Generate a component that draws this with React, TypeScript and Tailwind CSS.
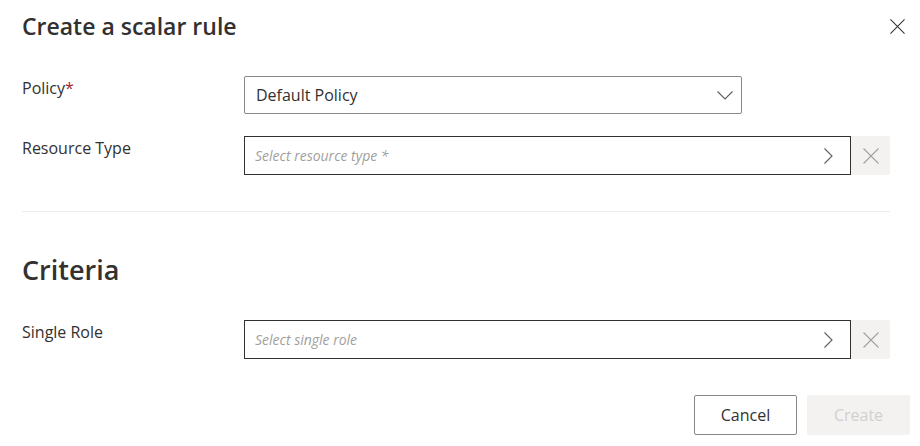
function Cross({ size, color }: { size: number; color: string }) {
  return (
    <svg width={size} height={size} viewBox="0 0 16 16" fill="none" stroke={color} strokeWidth={1.1}>
      <path d="M0.5 0.5 L15.5 15.5 M15.5 0.5 L0.5 15.5" />
    </svg>
  );
}

function Label({ text, required }: { text: string; required?: boolean }) {
  return (
    <div className="w-[222px] shrink-0 text-[16px] font-medium text-[#323130]">
      {text}
      {required && <span className="text-[#a4262c]">*</span>}
    </div>
  );
}

function PickerField({ placeholder }: { placeholder: string }) {
  return (
    <div className="flex">
      <div className="flex h-[39px] w-[607px] items-center justify-between border border-[#323130] pl-[10px] pr-[17px]">
        <span className="text-[14px] italic text-[#a19f9d]">{placeholder}</span>
        <svg width="9" height="16" viewBox="0 0 9 16" fill="none" stroke="#605e5c" strokeWidth={1.1}>
          <path d="M0.5 0.5 L8 8 L0.5 15.5" />
        </svg>
      </div>
      <button className="flex h-[39px] w-[39px] items-center justify-center rounded-r-[2px] bg-[#f3f2f1]">
        <Cross size={16} color="#a19f9d" />
      </button>
    </div>
  );
}

export default function App() {
  return (
    <div
      className="h-[446px] w-[920px] bg-white pl-[22px] pr-[10px] text-[#323130]"
      style={{ fontFamily: '"Open Sans", "Noto Sans", sans-serif' }}
    >
      <div className="flex items-center justify-between pt-[8px] pr-[5px]">
        <h1 className="text-[23px] font-semibold leading-[36px]">Create a scalar rule</h1>
        <Cross size={15} color="#323130" />
      </div>

      <div className="mt-[32px] flex">
        <Label text="Policy" required />
        <div className="flex h-[38px] w-[498px] items-center justify-between rounded-[2px] border border-[#8a8886] pl-[11px] pr-[8px]">
          <span className="text-[16px]">Default Policy</span>
          <svg width="16" height="9" viewBox="0 0 16 9" fill="none" stroke="#605e5c" strokeWidth={1.1}>
            <path d="M0.5 0.5 L8 8 L15.5 0.5" />
          </svg>
        </div>
      </div>

      <div className="mt-[22px] flex">
        <Label text="Resource Type" />
        <PickerField placeholder="Select resource type *" />
      </div>

      <div className="mr-[20px] mt-[36px] h-px bg-[#edebe9]" />

      <h2 className="mt-[40px] text-[27px] font-semibold leading-[36px]">Criteria</h2>

      <div className="mt-[32px] flex">
        <Label text="Single Role" />
        <PickerField placeholder="Select single role" />
      </div>

      <div className="mt-[36px] flex justify-end gap-[10px]">
        <button className="h-[40px] w-[103px] rounded-[2px] border border-[#8a8886] text-[16px] text-[#323130]">
          Cancel
        </button>
        <button className="h-[40px] w-[103px] rounded-[2px] bg-[#f3f2f1] text-[16px] text-[#d2d0ce]">
          Create
        </button>
      </div>
    </div>
  );
}
